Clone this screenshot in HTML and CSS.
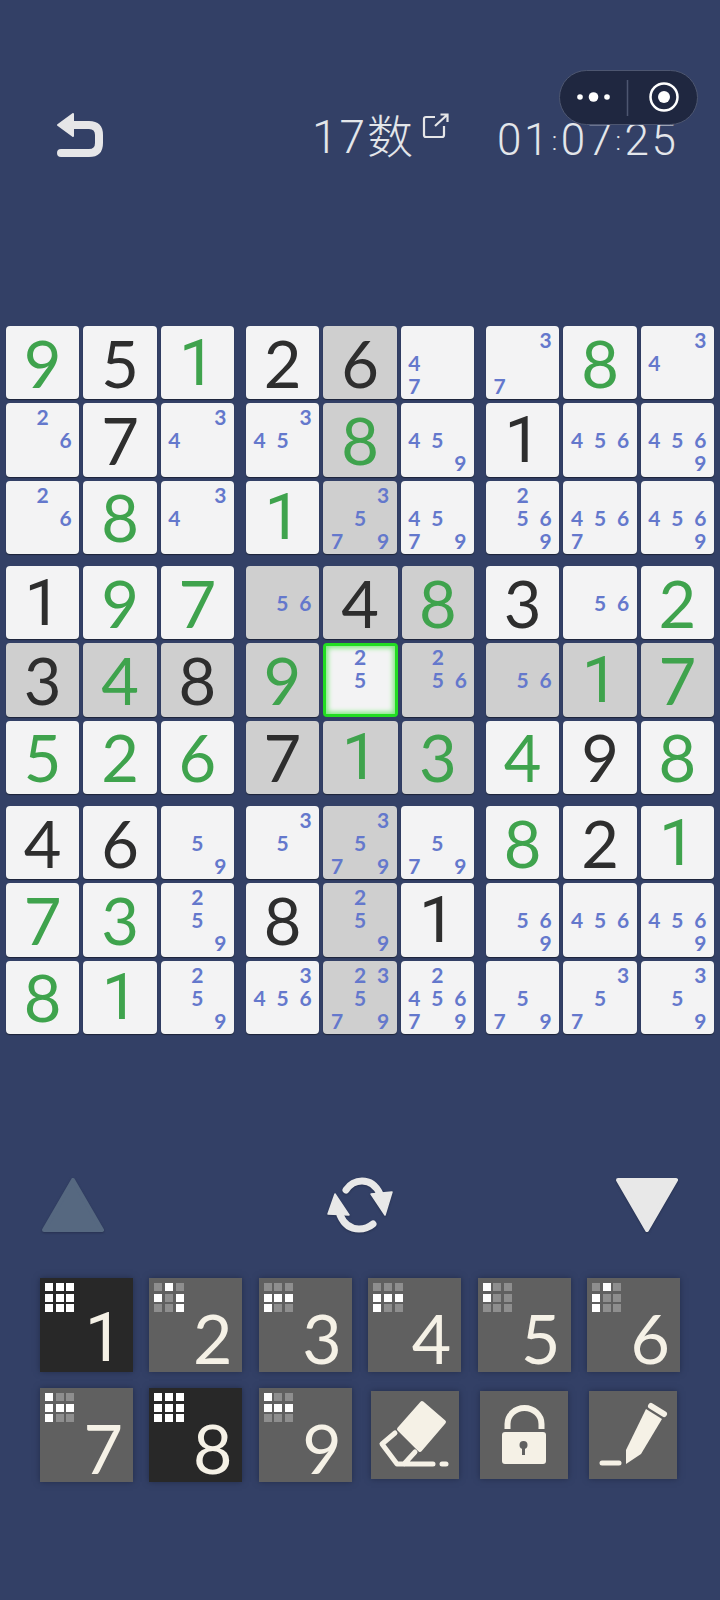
FILE: index.html
```html
<!DOCTYPE html>
<html lang="en">
<head>
  <meta charset="UTF-8" />
  <meta name="viewport" content="width=device-width, initial-scale=1.0"/>
  <title>Sudoku</title>
  <link rel="stylesheet" href="styles.css">
</head>
<body>
  <div class="top">
    <svg class="back" viewBox="0 0 46 44" width="46" height="44">
      <path d="M14 12H32Q42 12 42 22V30Q42 40 32 40H4" fill="none" stroke="#e6e6e8" stroke-width="8" stroke-linecap="round"/>
      <path d="M1 12L16 1V23Z" fill="#e6e6e8" stroke="#e6e6e8" stroke-width="2" stroke-linejoin="round"/>
    </svg>
    <div class="title">17数</div>
    <svg class="share" viewBox="0 0 28 26" width="28" height="26">
      <path d="M13 4H4Q2 4 2 6V22Q2 24 4 24H20Q22 24 22 22V13" fill="none" stroke="#e6e6e8" stroke-width="2.200"/>
      <path d="M13 13L25 2M18.500 1.500H25.500V9" fill="none" stroke="#e6e6e8" stroke-width="2.200"/>
    </svg>
    <div class="timer">01<i>:</i>07<i>:</i>25</div>
    <div class="capsule">
      <svg viewBox="0 0 139 55" width="139" height="55">
        <circle cx="21" cy="27" r="2.800" fill="#fff"/>
        <circle cx="34.500" cy="27" r="4.800" fill="#fff"/>
        <circle cx="48" cy="27" r="2.800" fill="#fff"/>
        <path d="M68.500 10V46" stroke="#4d5670" stroke-width="1.500"/>
        <circle cx="105" cy="27" r="13.500" fill="none" stroke="#fff" stroke-width="2.500"/>
        <circle cx="105" cy="27" r="6" fill="#fff"/>
      </svg>
    </div>
  </div>

  <div class="board" id="board"></div>

  <div class="arrows">
    <svg viewBox="0 0 64 56" width="64" height="56">
      <path d="M32 3L61 53H3Z" fill="#566880" stroke="#566880" stroke-width="4" stroke-linejoin="round"/>
    </svg>
    <svg viewBox="0 0 66 56" width="66" height="56">
      <path d="M19 13Q25 4 35 4Q47 4 53 17" fill="none" stroke="#e8e8e8" stroke-width="7" stroke-linecap="round"/>
      <path d="M44 17L65 15L58 38Z" fill="#e8e8e8" stroke="#e8e8e8" stroke-width="1.500" stroke-linejoin="round"/>
      <path d="M46 47Q40 52 32 52Q19 52 13 38" fill="none" stroke="#e8e8e8" stroke-width="7" stroke-linecap="round"/>
      <path d="M1 37L8 17L22 38Z" fill="#e8e8e8" stroke="#e8e8e8" stroke-width="1.500" stroke-linejoin="round"/>
    </svg>
    <svg viewBox="0 0 64 56" width="64" height="56">
      <path d="M32 53L61 3H3Z" fill="#e8e8e8" stroke="#e8e8e8" stroke-width="4" stroke-linejoin="round"/>
    </svg>
  </div>

  <div class="pad" id="pad">
    <div class="tool">
      <svg viewBox="0 0 88 88" width="88" height="88">
        <path d="M51 12L73 31L49 59L28 38Z" fill="#f5f1e6" stroke="#f5f1e6" stroke-width="4" stroke-linejoin="round"/>
        <path d="M24 42L11 53L26 73H62M44 61L33 73" fill="none" stroke="#f5f1e6" stroke-width="5" stroke-linecap="round" stroke-linejoin="round"/>
        <path d="M71 73H75" stroke="#f5f1e6" stroke-width="5" stroke-linecap="round"/>
      </svg>
    </div>
    <div class="tool">
      <svg viewBox="0 0 88 88" width="88" height="88">
        <path d="M27.500 38V33A17 16 0 0 1 61.500 33V38" fill="none" stroke="#f5f1e6" stroke-width="6"/>
        <rect x="22" y="41" width="44" height="32" rx="3" fill="#f5f1e6"/>
        <circle cx="43.500" cy="54" r="4" fill="#606060"/>
        <path d="M43.500 55V64" stroke="#606060" stroke-width="3"/>
      </svg>
    </div>
    <div class="tool">
      <svg viewBox="0 0 88 88" width="88" height="88">
        <path d="M37 73V59L57 18L73 28L52 63Z" fill="#f5f1e6"/>
        <path d="M62 15L75 23" stroke="#f5f1e6" stroke-width="6" stroke-linecap="round"/>
        <path d="M13 72H30" stroke="#f5f1e6" stroke-width="5" stroke-linecap="round"/>
      </svg>
    </div>
  </div>

  <script>
    // g = given in green, d = dark, anything else is a list of pencil marks
    const rows = [
      'g9 d5 g1 d2 d6 47 37 g8 34',
      '26 d7 34 345 g8 459 d1 456 4569',
      '26 g8 34 g1 3579 4579 2569 4567 4569',
      'd1 g9 g7 56 d4 g8 d3 56 g2',
      'd3 g4 d8 g9 25 256 56 g1 g7',
      'g5 g2 g6 d7 g1 g3 g4 d9 g8',
      'd4 d6 59 35 3579 579 g8 d2 g1',
      'g7 g3 259 d8 259 d1 569 456 4569',
      'g8 g1 259 3456 23579 245679 579 357 359'
    ];

    const board = document.getElementById('board');

    for (let by = 0; by < 3; by++) {
      for (let bx = 0; bx < 3; bx++) {
        const block = document.createElement('div');
        block.className = 'block';

        for (let y = by * 3; y < by * 3 + 3; y++) {
          for (let x = bx * 3; x < bx * 3 + 3; x++) {
            const value = rows[y].split(' ')[x];
            const cell = document.createElement('div');
            cell.className = 'cell';

            if (y === 4 || x === 4 || (by === 1 && bx === 1)) cell.classList.add('same');
            if (y === 4 && x === 4) cell.className = 'cell selected';

            if (value[0] === 'g' || value[0] === 'd') {
              cell.classList.add(value[0] === 'g' ? 'green' : 'dark');
              if (value[1] === '1') cell.classList.add('one');
              cell.textContent = value[1];
            } else {
              const notes = document.createElement('div');
              notes.className = 'notes';
              for (let n = 1; n <= 9; n++) {
                const span = document.createElement('span');
                span.textContent = value.includes(n) ? n : '';
                notes.appendChild(span);
              }
              cell.appendChild(notes);
            }
            block.appendChild(cell);
          }
        }
        board.appendChild(block);
      }
    }

    // which squares of the little map are lit on each number key
    const keys = {
      1: '111111111', 2: '010101001', 3: '000111100',
      4: '000111100', 5: '100100000', 6: '010100100',
      7: '100111100', 8: '111111111', 9: '100111000'
    };

    const pad = document.getElementById('pad');
    const firstTool = pad.querySelector('.tool');

    for (const n in keys) {
      const key = document.createElement('div');
      key.className = keys[n] === '111111111' ? 'key done' : 'key';
      if (n === '1') key.classList.add('one');

      const map = document.createElement('div');
      map.className = 'map';
      for (const c of keys[n]) {
        const sq = document.createElement('i');
        if (c === '1') sq.className = 'on';
        map.appendChild(sq);
      }

      const num = document.createElement('span');
      num.textContent = n;
      key.appendChild(map);
      key.appendChild(num);
      pad.insertBefore(key, firstTool);
    }
  </script>
</body>
</html>
```

FILE: styles.css
```css
body {
  margin: 0;
  height: 1600px;
  overflow: hidden;
  background-color: #334066;
  font-family: "Lato", sans-serif;
}

.top {
  position: relative;
  display: flex;
  height: 326px;
  color: #e3e6ea;
}

.back {
  margin: 113px 0 0 57px;
}

.title {
  margin: 110px 0 0 209px;
  width: 110px;
  font-family: "Roboto", "Noto Sans CJK SC", sans-serif;
  font-size: 46px;
  font-weight: 300;
  line-height: 54px;
  letter-spacing: 2px;
}

.share {
  margin: 113px 0 0 0;
}

.timer {
  margin: 113px 0 0 47px;
  font-family: "Roboto", sans-serif;
  font-size: 44px;
  font-weight: 300;
  line-height: 54px;
  letter-spacing: 2.500px;
}

.timer i {
  margin: 0 1px;
  font-style: normal;
  font-size: 26px;
  vertical-align: 5px;
}

.capsule {
  position: absolute;
  top: 70px;
  left: 559px;
  width: 139px;
  height: 55px;
  box-sizing: border-box;
  border: 1.500px solid #4d5670;
  border-radius: 28px;
  background-color: #1f2740;
}

.capsule svg {
  display: block;
  margin: -1.500px;
}

.board {
  display: grid;
  grid-template-columns: repeat(3, 228px);
  gap: 12px;
  margin-left: 6px;
}

.block {
  display: grid;
  grid-template-columns: repeat(3, 1fr);
  grid-auto-rows: 73.330px;
  gap: 4px;
}

.cell {
  display: flex;
  justify-content: center;
  align-items: center;
  box-sizing: border-box;
  background-color: #f3f3f4;
  border-radius: 4px;
  box-shadow: 0 1px 1px #1c2338;
  font-size: 65px;
  font-weight: 400;
}

.same {
  background-color: #cfcfcf;
}

.selected {
  border: 3px solid #22dd22;
  box-shadow: inset 0 0 5px 2px #7de87d;
}

.green {
  color: #3fa34d;
}

.dark {
  color: #2e2e2e;
}

.one {
  font-family: "Roboto", sans-serif;
}

.notes {
  display: grid;
  grid-template-columns: repeat(3, 23px);
  grid-auto-rows: 23px;
  color: #6478cc;
  font-size: 21px;
  font-weight: 700;
  line-height: 23px;
  text-align: center;
}

.arrows {
  display: flex;
  justify-content: space-between;
  align-items: flex-start;
  margin: 143px 41px 0 41px;
}

.arrows svg {
  filter: drop-shadow(0 1px 1px #26304f);
}

.pad {
  display: grid;
  grid-template-columns: repeat(6, 93px);
  grid-auto-rows: 94px;
  gap: 16px 16.400px;
  margin: 45px 0 0 40px;
}

.key {
  display: flex;
  justify-content: flex-end;
  align-items: flex-end;
  position: relative;
  background-color: #606060;
  box-shadow: 0 0 6px #232c4a;
  color: #f5f1e6;
  font-size: 68px;
  font-weight: 400;
  line-height: 68px;
  padding: 0 10px 0 0;
  box-sizing: border-box;
}

.done {
  background-color: #282828;
}

.map {
  position: absolute;
  top: 5px;
  left: 5px;
  display: grid;
  grid-template-columns: repeat(3, 8px);
  grid-auto-rows: 8px;
  gap: 2.700px;
}

.map i {
  background-color: #8e8e8e;
}

.map .on {
  background-color: #fff;
}

.tool {
  place-self: center;
  width: 88px;
  height: 88px;
  background-color: #606060;
  box-shadow: 0 0 6px #232c4a;
}

.tool svg {
  display: block;
}
```
